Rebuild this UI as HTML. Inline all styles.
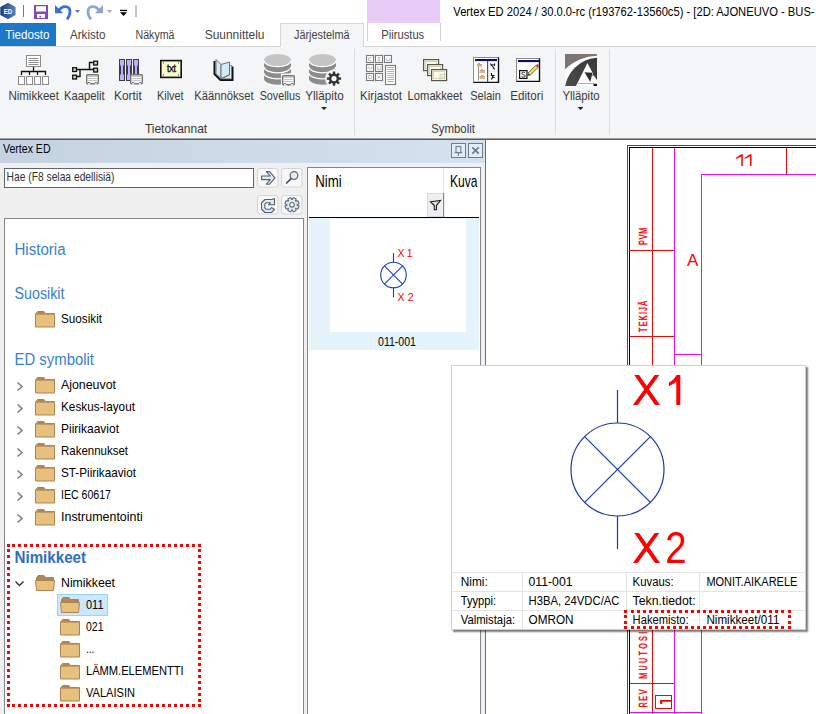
<!DOCTYPE html>
<html><head><meta charset="utf-8">
<style>
*{box-sizing:border-box}
body{margin:0;width:816px;height:714px;overflow:hidden;position:relative;background:#fff;font-family:"Liberation Sans",sans-serif;}
.a{position:absolute}
.t{position:absolute;white-space:nowrap;line-height:1}
.rl{position:absolute;white-space:nowrap;line-height:1;font-size:11.5px;color:#444;top:91px}
.tab{position:absolute;white-space:nowrap;line-height:1;font-size:12px;color:#444;top:29px}
.ti{position:absolute;white-space:nowrap;line-height:1;font-size:12px;color:#000}
.tt{position:absolute;white-space:nowrap;line-height:1;font-size:11.5px;color:#000}
.hd{position:absolute;white-space:nowrap;line-height:1;font-size:15px;color:#3b7fd1}
</style></head><body>

<!-- title bar -->
<div class="a" style="left:0;top:0;width:816px;height:23px;background:#fff"></div>
<div class="a" style="left:367px;top:0;width:73px;height:23px;background:#e8ccf8"></div>

<!-- tab row -->
<div class="a" style="left:0;top:23px;width:56px;height:23px;background:#1e78c8"></div>
<div class="a" style="left:280px;top:23px;width:84px;height:24px;background:#f4f5f7;border:1px solid #d6d6d6;border-bottom:none"></div>
<div class="a" style="left:367px;top:23px;width:74px;height:18px;border-left:1px solid #d0d0d0;border-right:1px solid #d0d0d0"></div>
<div class="a" style="left:0;top:46px;width:280px;height:1px;background:#d6d6d6"></div>
<div class="a" style="left:364px;top:46px;width:452px;height:1px;background:#d6d6d6"></div>

<!-- ribbon -->
<div class="a" style="left:0;top:47px;width:816px;height:92px;background:#f4f5f7"></div>
<div class="a" style="left:354px;top:49px;width:1px;height:86px;background:#dcdcdc"></div>
<div class="a" style="left:555px;top:49px;width:1px;height:86px;background:#dcdcdc"></div>
<div class="a" style="left:609px;top:49px;width:1px;height:86px;background:#dcdcdc"></div>

<svg class="a" style="left:0;top:0" width="620" height="120" viewBox="0 0 620 120"><defs><linearGradient id="hexg" x1="0" x2="1"><stop offset="0" stop-color="#1b3d78"/><stop offset="1" stop-color="#5b80b9"/></linearGradient></defs><path d="M8,2.8 L15.6,7 V15 L8,19.2 L0.3,15 V7 Z" fill="url(#hexg)"/><text x="8" y="13.8" font-family="Liberation Sans" font-weight="bold" font-size="7" fill="#fff" text-anchor="middle" textLength="8.4" lengthAdjust="spacingAndGlyphs">ED</text><rect x="23" y="5" width="1" height="12" fill="#7a7a7a"/><path d="M34,5 H48 V19 H34 Z" fill="#8547b8"/><rect x="36" y="6.2" width="10" height="5.3" fill="#fff"/><rect x="37" y="14" width="8" height="4" fill="#fff"/><rect x="39.5" y="15.8" width="1.6" height="1.6" fill="#8547b8"/><path d="M58.5,11 C61.5,5.5 70,4.5 70,11.5 C70,14.8 68.8,17.3 67,19.3" fill="none" stroke="#3a6fd8" stroke-width="2.7"/><path d="M55,5 V13.2 H63.2 Z" fill="#3a6fd8"/><path d="M75,10 H80 L77.5,13 Z" fill="#5577a8"/><path d="M99.5,11 C96.5,5.5 88,4.5 88,11.5 C88,14.8 89.2,17.3 91,19.3" fill="none" stroke="#8ea6cc" stroke-width="2.7"/><path d="M103,5 V13.2 H94.8 Z" fill="#8ea6cc"/><path d="M107,10 H112 L109.5,13 Z" fill="#a8a8a8"/><rect x="120" y="9.8" width="7" height="1.3" fill="#000"/><path d="M120,12.2 H127 L123.5,16 Z" fill="#000"/><rect x="135.5" y="5" width="1" height="12" fill="#888"/><rect x="26.5" y="55.5" width="14" height="11" fill="#fff" stroke="#8c8c8c"/><path d="M28.5,58.5 H38.5 M28.5,60.5 H38.5 M28.5,62.5 H38.5 M28.5,64.5 H38.5" stroke="#808080" stroke-width="0.9"/><path d="M33.5,67 V71.5 M21.5,75 V71.5 H45.5 V75 M29.5,71.5 V75 M37.5,71.5 V75" fill="none" stroke="#111" stroke-width="1.3"/><rect x="18.5" y="76.5" width="6" height="8" fill="#fff" stroke="#8c8c8c"/><rect x="26.5" y="76.5" width="6" height="8" fill="#fff" stroke="#8c8c8c"/><rect x="34.5" y="76.5" width="6" height="8" fill="#fff" stroke="#8c8c8c"/><rect x="42.5" y="76.5" width="6" height="8" fill="#fff" stroke="#8c8c8c"/><path d="M77,69.5 H93 M80,69.5 V76.5 H77 M89.5,69.5 V62.5 H93" fill="none" stroke="#111" stroke-width="1.4"/><rect x="72.7" y="67.7" width="3.8" height="3.8" fill="#b6f0a8" stroke="#111" stroke-width="1.3"/><rect x="72.7" y="75.2" width="3.8" height="3.8" fill="#b6f0a8" stroke="#111" stroke-width="1.3"/><rect x="93.7" y="61.2" width="3.8" height="3.8" fill="#b6f0a8" stroke="#111" stroke-width="1.3"/><rect x="93.7" y="68.2" width="3.8" height="3.8" fill="#b6f0a8" stroke="#111" stroke-width="1.3"/><g transform="translate(86,74)"><rect x="0.7" y="0.7" width="11.6" height="9" rx="1" fill="#fff" stroke="#747474" stroke-width="1.4"/><rect x="2" y="9" width="2.2" height="1.6" fill="#fff"/><rect x="8.8" y="9" width="2.2" height="1.6" fill="#fff"/><rect x="2" y="8" width="2.2" height="1.2" fill="#747474"/><rect x="8.8" y="8" width="2.2" height="1.2" fill="#747474"/><path d="M2.2,2.5 H10.8 M2.2,4.5 H10.8 M2.2,6.5 H10.8" stroke="#bdbdbd" stroke-width="0.9"/></g><rect x="119" y="59" width="6" height="22" fill="#363c4c"/><path d="M120,60 H124 V64.5 L123,66.5 V73.5 L124,75.5 V80 H120 V75.5 L121,73.5 V66.5 L120,64.5 Z" fill="#c3b0fa"/><rect x="126" y="59" width="6" height="22" fill="#363c4c"/><path d="M127,60 H131 V64.5 L130,66.5 V73.5 L131,75.5 V80 H127 V75.5 L128,73.5 V66.5 L127,64.5 Z" fill="#c3b0fa"/><rect x="133" y="59" width="6" height="22" fill="#363c4c"/><path d="M134,60 H138 V64.5 L137,66.5 V73.5 L138,75.5 V80 H134 V75.5 L135,73.5 V66.5 L134,64.5 Z" fill="#c3b0fa"/><g transform="translate(130,74)"><rect x="0.7" y="0.7" width="11.6" height="9" rx="1" fill="#fff" stroke="#747474" stroke-width="1.4"/><rect x="2" y="9" width="2.2" height="1.6" fill="#fff"/><rect x="8.8" y="9" width="2.2" height="1.6" fill="#fff"/><rect x="2" y="8" width="2.2" height="1.2" fill="#747474"/><rect x="8.8" y="8" width="2.2" height="1.2" fill="#747474"/><path d="M2.2,2.5 H10.8 M2.2,4.5 H10.8 M2.2,6.5 H10.8" stroke="#bdbdbd" stroke-width="0.9"/></g><rect x="160.8" y="60.6" width="20.4" height="16.8" fill="#fbfbcb" stroke="#111" stroke-width="1.6"/><rect x="163" y="62.5" width="1" height="1" fill="#333"/><rect x="178" y="62.5" width="1" height="1" fill="#333"/><rect x="163" y="74.5" width="1" height="1" fill="#333"/><rect x="178" y="74.5" width="1" height="1" fill="#333"/><text x="171" y="72.3" font-family="Liberation Sans" font-size="10.5" fill="#111" stroke="#111" stroke-width="0.25" text-anchor="middle" letter-spacing="-0.8">txt</text><path d="M214.5,61 V74 L220.5,80 H232.5 V66.5" fill="none" stroke="#111" stroke-width="2"/><path d="M216,59.5 L221,64.5 V78.5 L216,73.5 Z" fill="#d5eaf9" stroke="#6e6e6e"/><path d="M229.5,65.5 H231.5 V78.8 H221.5 L229.5,75 Z" fill="#d5eaf9" stroke="#777" stroke-width="0.9"/><path d="M221,64.5 L229.5,62 V74.5 L221,78.5 Z" fill="#d5eaf9" stroke="#6e6e6e"/><path d="M264,60 V78.8 A13.5,6 0 0 0 291,78.8 V60 Z" fill="#8c8c8c"/><ellipse cx="277.5" cy="60" rx="13.5" ry="6" fill="#c4c4c4"/><path d="M264,60.6 A13.5,6 0 0 0 291,60.6 M264,66.8 A13.5,6 0 0 0 291,66.8 M264,72.9 A13.5,6 0 0 0 291,72.9" fill="none" stroke="#fff" stroke-width="1.3"/><rect x="281" y="73.5" width="15" height="12" fill="#f4f5f7"/><g transform="translate(282,75)"><rect x="0.7" y="0.7" width="11.6" height="9" rx="1" fill="#fff" stroke="#747474" stroke-width="1.4"/><rect x="2" y="9" width="2.2" height="1.6" fill="#fff"/><rect x="8.8" y="9" width="2.2" height="1.6" fill="#fff"/><rect x="2" y="8" width="2.2" height="1.2" fill="#747474"/><rect x="8.8" y="8" width="2.2" height="1.2" fill="#747474"/><path d="M2.2,2.5 H10.8 M2.2,4.5 H10.8 M2.2,6.5 H10.8" stroke="#bdbdbd" stroke-width="0.9"/></g><path d="M309,60 V78.8 A13.5,6 0 0 0 336,78.8 V60 Z" fill="#8c8c8c"/><ellipse cx="322.5" cy="60" rx="13.5" ry="6" fill="#c4c4c4"/><path d="M309,60.6 A13.5,6 0 0 0 336,60.6 M309,66.8 A13.5,6 0 0 0 336,66.8 M309,72.9 A13.5,6 0 0 0 336,72.9" fill="none" stroke="#fff" stroke-width="1.3"/><circle cx="334" cy="78.5" r="9" fill="#f4f5f7"/><g fill="#333"><circle cx="334" cy="78.6" r="5.1"/><rect x="332.8" y="71.5" width="2.4" height="3" transform="rotate(0 334 78.6)"/><rect x="332.8" y="71.5" width="2.4" height="3" transform="rotate(45 334 78.6)"/><rect x="332.8" y="71.5" width="2.4" height="3" transform="rotate(90 334 78.6)"/><rect x="332.8" y="71.5" width="2.4" height="3" transform="rotate(135 334 78.6)"/><rect x="332.8" y="71.5" width="2.4" height="3" transform="rotate(180 334 78.6)"/><rect x="332.8" y="71.5" width="2.4" height="3" transform="rotate(225 334 78.6)"/><rect x="332.8" y="71.5" width="2.4" height="3" transform="rotate(270 334 78.6)"/><rect x="332.8" y="71.5" width="2.4" height="3" transform="rotate(315 334 78.6)"/></g><circle cx="334" cy="78.6" r="2.6" fill="#fff"/><rect x="366.5" y="55.5" width="7" height="7" fill="#fff" stroke="#7a7a7a" stroke-width="1.1"/><rect x="375.5" y="55.5" width="7" height="7" fill="#fff" stroke="#7a7a7a" stroke-width="1.1"/><rect x="384.5" y="55.5" width="7" height="7" fill="#fff" stroke="#7a7a7a" stroke-width="1.1"/><rect x="366.5" y="64.5" width="7" height="7" fill="#fff" stroke="#7a7a7a" stroke-width="1.1"/><rect x="375.5" y="64.5" width="7" height="7" fill="#fff" stroke="#7a7a7a" stroke-width="1.1"/><rect x="366.5" y="73.5" width="7" height="7" fill="#fff" stroke="#7a7a7a" stroke-width="1.1"/><rect x="375.5" y="73.5" width="7" height="7" fill="#fff" stroke="#7a7a7a" stroke-width="1.1"/><path d="M371.5,57.8 H368.8 V60.8 H371.5" fill="none" stroke="#b0b0b0" stroke-width="0.9"/><path d="M377.5,57.8 H380.5 M377.5,60.8 H380.5 M379,57.8 V60.8" fill="none" stroke="#b0b0b0" stroke-width="0.9"/><path d="M386.8,57.8 V60.8 H389.8 V57.8" fill="none" stroke="#b0b0b0" stroke-width="0.9"/><path d="M368.8,66.5 V68.5 Q370.3,70 371.8,68.5 V66.5" fill="none" stroke="#b0b0b0" stroke-width="0.9"/><path d="M377.8,66.3 V69.8 H380.8 V66.3" fill="none" stroke="#b0b0b0" stroke-width="0.9"/><circle cx="370" cy="77" r="1.7" fill="none" stroke="#b0b0b0" stroke-width="0.9"/><path d="M377.5,75.5 L380.5,78.5 M380.5,75.5 L377.5,78.5" stroke="#b0b0b0" stroke-width="0.9"/><rect x="385.5" y="65.5" width="10" height="19" fill="#fff" stroke="#7a7a7a" stroke-width="1.1"/><path d="M387.3,67.5 H394 M387.3,69.5 H394 M387.3,71.5 H394 M387.3,73.5 H394 M387.3,75.5 H394 M387.3,77.5 H394 M387.3,79.5 H394 M387.3,81.5 H394" stroke="#a8a8a8" stroke-width="0.9"/><rect x="423.6" y="59.6" width="15" height="11" fill="#fbf9ea" stroke="#555" stroke-width="1.2"/><rect x="425.5" y="61.5" width="11" height="7" fill="none" stroke="#cfcfa6" stroke-width="0.9"/><rect x="427.6" y="64.6" width="15" height="11" fill="#fbf9ea" stroke="#555" stroke-width="1.2"/><rect x="429.5" y="66.5" width="11" height="7" fill="none" stroke="#cfcfa6" stroke-width="0.9"/><rect x="431.6" y="69.6" width="15" height="11" fill="#fbf9ea" stroke="#555" stroke-width="1.2"/><rect x="433.5" y="71.5" width="11" height="7" fill="none" stroke="#cfcfa6" stroke-width="0.9"/><path d="M440,74.5 H446 M440,77 H446 M440,74.5 V80" stroke="#cfcfa6" stroke-width="0.9"/><rect x="473.5" y="57.5" width="25" height="25" fill="#fff" stroke="#8a8a8a"/><path d="M473.5,82.4 H498.5 V57.5" fill="none" stroke="#111" stroke-width="1.4"/><rect x="475" y="59" width="22" height="2.1" fill="#0a0a80"/><rect x="487" y="61" width="1.2" height="21" fill="#555"/><rect x="488" y="70.8" width="9" height="0.8" fill="#ddd"/><rect x="478" y="66.5" width="0.9" height="14" fill="#8a8a8a"/><path d="M479,72 H480 M479,77 H480" stroke="#8a8a8a" stroke-width="0.8"/><rect x="477" y="64" width="5" height="3" fill="#dcb88b"/><rect x="478" y="63" width="2" height="1" fill="#c59f72"/><rect x="477" y="64" width="5" height="0.8" fill="#c59f72"/><rect x="480" y="70" width="5" height="3" fill="#dcb88b"/><rect x="481" y="69" width="2" height="1" fill="#c59f72"/><rect x="480" y="70" width="5" height="0.8" fill="#c59f72"/><rect x="480" y="76" width="5" height="3" fill="#dcb88b"/><rect x="481" y="75" width="2" height="1" fill="#c59f72"/><rect x="480" y="76" width="5" height="0.8" fill="#c59f72"/><path d="M490.5,63.5 L491.5,65.5 L493.5,64.5 M494.5,63.5 V66 M492.5,66 L494.5,69.5" fill="none" stroke="#111" stroke-width="1.2"/><path d="M491.5,73 V75.5 H494.5 M493.5,75 L491.5,79.5 M492.5,77.5 H494.5" fill="none" stroke="#111" stroke-width="1.2"/><rect x="516.5" y="58.5" width="23" height="23" fill="#fff" stroke="#8a8a8a"/><path d="M516.5,81.4 H539.5 V58.5" fill="none" stroke="#111" stroke-width="1.4"/><rect x="518" y="60" width="21" height="2.1" fill="#0a0a80"/><rect x="519.6" y="70.6" width="7.4" height="7.8" fill="#fff" stroke="#111" stroke-width="1.2"/><path d="M525.2,73 C525,72 521.8,71.7 521.6,73.3 C521.5,75 525.3,74.2 525.3,76.1 C525.2,77.5 522,77.4 521.5,76.3" fill="none" stroke="#111" stroke-width="0.85"/><path d="M528,73.2 L535.8,65.4 L537.9,67.5 L530.1,75.3 Z" fill="#f3ec3c" stroke="#3a3a3a" stroke-width="0.8"/><path d="M535.8,65.4 L537.4,63.8 L539.5,65.9 L537.9,67.5 Z" fill="#e83870"/><path d="M528,73.2 L527.6,75.7 L530.1,75.3 Z" fill="#333"/><g transform="translate(565,54)"><clipPath id="vclip"><rect width="32" height="32"/></clipPath><linearGradient id="vg" x1="0" y1="1" x2="1" y2="0"><stop offset="0" stop-color="#585858"/><stop offset="1" stop-color="#2e2e2e"/></linearGradient><g clip-path="url(#vclip)"><rect width="32" height="32" fill="#7c7572"/><circle cx="33" cy="49" r="47.2" fill="#fff"/><circle cx="34" cy="38" r="34.3" fill="url(#vg)"/><path d="M11,32 L22.4,9 L28,19.5 L27.2,22 L28.7,21.6 L32,26 V32 Z" fill="#fff"/><path d="M19.5,18.2 L27.5,18.8 L25.3,28 Z" fill="#2f2f2f"/><path d="M13,29.5 H29" stroke="#999" stroke-width="0.8"/><rect x="28.5" y="29.8" width="3.5" height="2.2" fill="#111"/></g></g><path d="M321,107 H327 L324,110 Z" fill="#222"/><path d="M577.5,107 H583.5 L580.5,110 Z" fill="#222"/></svg>
<div class="a" style="left:0;top:138px;width:816px;height:1px;background:#a0a0a0"></div><div class="a" style="left:0;top:139px;width:816px;height:1px;background:#5a5a5a"></div>

<!-- left panel -->
<div class="a" style="left:0;top:140px;width:485px;height:574px;background:#f0f0f0"></div>
<div class="a" style="left:0;top:140px;width:485px;height:23px;background:linear-gradient(90deg,#c5d3e1,#d4e2ef)"></div>
<div class="a" style="left:485px;top:140px;width:1px;height:574px;background:#6f6f6f"></div>

<!-- search -->
<div class="a" style="left:4px;top:168px;width:250px;height:20px;background:#fff;border:1px solid #646464"></div>

<!-- tree panel -->
<div class="a" style="left:4px;top:218px;width:300px;height:500px;background:#fff;border:1px solid #828790"></div>
<div class="a" style="left:57px;top:594px;width:51px;height:22px;background:#cce8ff;border:1px solid #99d1ff"></div>
<svg class="a" style="left:0;top:0" width="120" height="714" viewBox="0 0 120 714"><path d="M35.5,327 V314 L37.5,311.5 H44 L45.5,313.5 H54.5 V327 Z" fill="#e6c07c" stroke="#ad8352"/><path d="M36,314 L37.7,312 H43.8 L45.3,314 Z" fill="#b18756"/><rect x="36" y="314" width="18" height="0.8" fill="#b9925f"/><path d="M35.5,393 V380 L37.5,377.5 H44 L45.5,379.5 H54.5 V393 Z" fill="#e6c07c" stroke="#ad8352"/><path d="M36,380 L37.7,378 H43.8 L45.3,380 Z" fill="#b18756"/><rect x="36" y="380" width="18" height="0.8" fill="#b9925f"/><path d="M17.5,382.5 L22.0,386.5 L17.5,390.5" fill="none" stroke="#7a7a7a" stroke-width="1.4"/><path d="M35.5,415 V402 L37.5,399.5 H44 L45.5,401.5 H54.5 V415 Z" fill="#e6c07c" stroke="#ad8352"/><path d="M36,402 L37.7,400 H43.8 L45.3,402 Z" fill="#b18756"/><rect x="36" y="402" width="18" height="0.8" fill="#b9925f"/><path d="M17.5,404.5 L22.0,408.5 L17.5,412.5" fill="none" stroke="#7a7a7a" stroke-width="1.4"/><path d="M35.5,437 V424 L37.5,421.5 H44 L45.5,423.5 H54.5 V437 Z" fill="#e6c07c" stroke="#ad8352"/><path d="M36,424 L37.7,422 H43.8 L45.3,424 Z" fill="#b18756"/><rect x="36" y="424" width="18" height="0.8" fill="#b9925f"/><path d="M17.5,426.5 L22.0,430.5 L17.5,434.5" fill="none" stroke="#7a7a7a" stroke-width="1.4"/><path d="M35.5,459 V446 L37.5,443.5 H44 L45.5,445.5 H54.5 V459 Z" fill="#e6c07c" stroke="#ad8352"/><path d="M36,446 L37.7,444 H43.8 L45.3,446 Z" fill="#b18756"/><rect x="36" y="446" width="18" height="0.8" fill="#b9925f"/><path d="M17.5,448.5 L22.0,452.5 L17.5,456.5" fill="none" stroke="#7a7a7a" stroke-width="1.4"/><path d="M35.5,481 V468 L37.5,465.5 H44 L45.5,467.5 H54.5 V481 Z" fill="#e6c07c" stroke="#ad8352"/><path d="M36,468 L37.7,466 H43.8 L45.3,468 Z" fill="#b18756"/><rect x="36" y="468" width="18" height="0.8" fill="#b9925f"/><path d="M17.5,470.5 L22.0,474.5 L17.5,478.5" fill="none" stroke="#7a7a7a" stroke-width="1.4"/><path d="M35.5,503 V490 L37.5,487.5 H44 L45.5,489.5 H54.5 V503 Z" fill="#e6c07c" stroke="#ad8352"/><path d="M36,490 L37.7,488 H43.8 L45.3,490 Z" fill="#b18756"/><rect x="36" y="490" width="18" height="0.8" fill="#b9925f"/><path d="M17.5,492.5 L22.0,496.5 L17.5,500.5" fill="none" stroke="#7a7a7a" stroke-width="1.4"/><path d="M35.5,525 V512 L37.5,509.5 H44 L45.5,511.5 H54.5 V525 Z" fill="#e6c07c" stroke="#ad8352"/><path d="M36,512 L37.7,510 H43.8 L45.3,512 Z" fill="#b18756"/><rect x="36" y="512" width="18" height="0.8" fill="#b9925f"/><path d="M17.5,514.5 L22.0,518.5 L17.5,522.5" fill="none" stroke="#7a7a7a" stroke-width="1.4"/><path d="M15.5,581.5 L19.5,585.5 L23.5,581.5" fill="none" stroke="#333" stroke-width="1.4"/><path d="M36.5,578 L38,575.5 H44 L45.5,577.5 H53.5 V580 H36.5 Z" fill="#b18756" stroke="#ad8352"/><path d="M35.5,580.5 H54.5 L53.5,590.5 H36.5 Z" fill="#e6c07c" stroke="#ad8352"/><path d="M61.5,600 L63,597.5 H69 L70.5,599.5 H78.5 V602 H61.5 Z" fill="#b18756" stroke="#ad8352"/><path d="M60.5,602.5 H79.5 L78.5,612.5 H61.5 Z" fill="#e6c07c" stroke="#ad8352"/><path d="M60.5,635 V622 L62.5,619.5 H69 L70.5,621.5 H79.5 V635 Z" fill="#e6c07c" stroke="#ad8352"/><path d="M61,622 L62.7,620 H68.8 L70.3,622 Z" fill="#b18756"/><rect x="61" y="622" width="18" height="0.8" fill="#b9925f"/><path d="M60.5,657 V644 L62.5,641.5 H69 L70.5,643.5 H79.5 V657 Z" fill="#e6c07c" stroke="#ad8352"/><path d="M61,644 L62.7,642 H68.8 L70.3,644 Z" fill="#b18756"/><rect x="61" y="644" width="18" height="0.8" fill="#b9925f"/><path d="M60.5,679 V666 L62.5,663.5 H69 L70.5,665.5 H79.5 V679 Z" fill="#e6c07c" stroke="#ad8352"/><path d="M61,666 L62.7,664 H68.8 L70.3,666 Z" fill="#b18756"/><rect x="61" y="666" width="18" height="0.8" fill="#b9925f"/><path d="M60.5,701 V688 L62.5,685.5 H69 L70.5,687.5 H79.5 V701 Z" fill="#e6c07c" stroke="#ad8352"/><path d="M61,688 L62.7,686 H68.8 L70.3,688 Z" fill="#b18756"/><rect x="61" y="688" width="18" height="0.8" fill="#b9925f"/></svg>
<div class="a" style="left:7px;top:544px;width:194px;height:163px;border:3px dotted #f00"></div>

<!-- grid -->
<div class="a" style="left:307px;top:167px;width:174px;height:560px;background:#fff;border:1px solid #828790"></div>
<div class="a" style="left:309px;top:217px;width:170px;height:1px;background:#000"></div>
<div class="a" style="left:309px;top:218px;width:170px;height:132px;background:#e5f3fb"></div>
<div class="a" style="left:330px;top:219px;width:136px;height:113px;background:#fff"></div>

<svg class="a" style="left:0;top:0" width="816" height="360" viewBox="0 0 816 360"><rect x="451.5" y="143.5" width="14" height="14" fill="#e3edf7" stroke="#6f7e8c"/><rect x="456" y="146.5" width="4.8" height="6" fill="none" stroke="#6f7e8c" stroke-width="1.1"/><path d="M454.5,152.8 H462.3 M458.4,152.8 V156" stroke="#6f7e8c" stroke-width="1.1"/><rect x="468.5" y="143.5" width="14" height="14" fill="#e3edf7" stroke="#6f7e8c"/><path d="M472.3,147.3 L478.7,153.7 M478.7,147.3 L472.3,153.7" stroke="#6f7e8c" stroke-width="1.8"/><rect x="257.5" y="168.5" width="20.5" height="18.5" rx="2.5" fill="#f8f8f8" stroke="#d4d4d4"/><rect x="281.5" y="168.5" width="20.5" height="18.5" rx="2.5" fill="#f8f8f8" stroke="#d4d4d4"/><rect x="257.5" y="195.5" width="20.5" height="18.5" rx="2.5" fill="#f8f8f8" stroke="#d4d4d4"/><rect x="281.5" y="195.5" width="20.5" height="18.5" rx="2.5" fill="#f8f8f8" stroke="#d4d4d4"/><polygon points="266.3,171.6 269.6,171.6 275,177.8 269.6,184.2 266.3,184.2 270.3,179.6 261.6,179.6 261.6,176 270.3,176" fill="#e2eaf1" stroke="#4f6274" stroke-width="1.1" stroke-linejoin="round"/><circle cx="294" cy="175.5" r="3.8" fill="#e5ecf2" stroke="#5a6e80" stroke-width="1.3"/><path d="M291.3,178.3 L286.2,183.5" stroke="#44505c" stroke-width="1.7"/><polygon points="272,199.5 265,199.5 261.5,203 261.5,209 265,212.5 271.5,212.5 274.5,209.5 271.5,207.5 270,209.3 266.3,209.3 264.8,207.8 264.8,204.2 266.3,202.7 270.5,202.7 268.5,204.8 274.5,204.8 274.5,198.5" fill="#e2eaf1" stroke="#4f6274" stroke-width="1.1" stroke-linejoin="round"/><polygon points="299.07,206.18 297.97,208.82 295.72,208.57 295.77,208.52 296.02,210.77 293.38,211.87 291.96,210.10 292.04,210.10 290.62,211.87 287.98,210.77 288.23,208.52 288.28,208.57 286.03,208.82 284.93,206.18 286.70,204.76 286.70,204.84 284.93,203.42 286.03,200.78 288.28,201.03 288.23,201.08 287.98,198.83 290.62,197.73 292.04,199.50 291.96,199.50 293.38,197.73 296.02,198.83 295.77,201.08 295.72,201.03 297.97,200.78 299.07,203.42 297.30,204.84 297.30,204.76" fill="#e3eaf0" stroke="#5a6e80" stroke-width="1.1"/><circle cx="292" cy="204.8" r="2.3" fill="#fff" stroke="#5a6e80" stroke-width="1.1"/><rect x="443" y="168" width="1" height="49" fill="#e5e5e5"/><rect x="427.5" y="193.5" width="16" height="23" fill="#efefef" stroke="#dadada"/><rect x="443" y="193" width="1.2" height="24" fill="#8a8a8a"/><path d="M430.5,201.8 L440.5,200.5 L436.5,205.5 V209.8 H434.3 V205.5 Z" fill="#dcdcdc" stroke="#1a1a1a" stroke-width="1.1" stroke-linejoin="miter"/><g stroke="#1c3cbf" stroke-width="1.05" fill="none"><circle cx="393.5" cy="275" r="12.8"/><path d="M393.5,253 V262.2 M393.5,287.8 V297.5 M384.4,265.9 L402.6,284.1 M402.6,265.9 L384.4,284.1"/></g><g fill="#f00" font-family="Liberation Sans" font-size="10.5"><text x="397.5" y="256.8" textLength="15" lengthAdjust="spacing">X1</text><text x="397.5" y="300.6" textLength="16" lengthAdjust="spacing">X2</text></g></svg>
<!-- canvas -->
<div class="a" style="left:486px;top:140px;width:330px;height:574px;background:#fff"></div>


<svg class="a" style="left:486px;top:140px" width="330" height="574" viewBox="486 140 330 574">
<g shape-rendering="crispEdges">
<rect x="627" y="145" width="189" height="1" fill="#008000"/>
<rect x="627" y="145" width="1" height="569" fill="#008000"/>
<rect x="629" y="147" width="187" height="1" fill="#000"/>
<rect x="629" y="147" width="1" height="567" fill="#000"/>
<rect x="652" y="148" width="1" height="566" fill="#f00"/>
<rect x="674" y="148" width="1" height="566" fill="#f0f"/>
<rect x="701" y="174" width="115" height="1" fill="#f0f"/>
<rect x="701" y="174" width="1" height="540" fill="#f0f"/>
<rect x="786" y="148" width="1" height="26" fill="#f00"/>
<rect x="630" y="250" width="44" height="1" fill="#f00"/>
<rect x="630" y="336" width="44" height="1" fill="#f00"/>
<rect x="675" y="354" width="26" height="1" fill="#f0f"/>
<rect x="630" y="683" width="44" height="1" fill="#f00"/>
<rect x="630" y="712" width="71" height="1" fill="#f0f"/>
<rect x="655.5" y="695.5" width="16" height="13" fill="none" stroke="#f00" stroke-width="1"/>
</g>
<g fill="#f00" font-family="Liberation Sans">
<path d="M741.3,154.2 H742.8 V166 H741.3 V156.5 L736.0,159.1 V157.7 Z"/><path d="M750.0,154.2 H751.5 V166 H750.0 V156.5 L744.7,159.1 V157.7 Z"/>
<text x="687" y="266" font-size="17">A</text>
<text transform="translate(647,245) rotate(-90) scale(0.62,1)" font-size="11.5" stroke="#f00" stroke-width="0.45" textLength="27.9" lengthAdjust="spacing">PVM</text>
<text transform="translate(647,332) rotate(-90) scale(0.62,1)" font-size="11.5" stroke="#f00" stroke-width="0.45" textLength="50.0" lengthAdjust="spacing">TEKIJÄ</text>
<text transform="translate(647,678.8) rotate(-90) scale(0.62,1)" font-size="11.5" stroke="#f00" stroke-width="0.45" textLength="75.8" lengthAdjust="spacing">MUUTOSI</text>
<text transform="translate(647,707.5) rotate(-90) scale(0.62,1)" font-size="11.5" stroke="#f00" stroke-width="0.45" textLength="29.0" lengthAdjust="spacing">REV</text>
<path d="M660,700 H671 V701.7 H662 L662.4,704 H660.2 Z"/>
</g>
</svg>

<!-- tooltip -->
<div class="a" style="left:451px;top:365px;width:355px;height:265px;background:#fff;border:1px solid #d0d0d0;box-shadow:2px 2px 1.5px rgba(0,0,0,.5)"></div>
<svg class="a" style="left:452px;top:366px" width="354" height="206" viewBox="452 366 354 206">
<g stroke="#1a38b4" stroke-width="1.2" fill="none">
<circle cx="617.5" cy="469.5" r="46.5"/>
<line x1="617.5" y1="390" x2="617.5" y2="423"/>
<line x1="617.5" y1="516" x2="617.5" y2="549"/>
<line x1="584.6" y1="436.6" x2="650.4" y2="502.4"/>
<line x1="650.4" y1="436.6" x2="584.6" y2="502.4"/>
</g>
<g fill="#f00"><polygon points="634.3,375 639.1,375 660,405 655,405"/><polygon points="654.6,375 659.3,375 637.7,405 632.9,405"/><polygon points="634.3,533 639.1,533 660,563 655,563"/><polygon points="654.6,533 659.3,533 637.7,563 632.9,563"/><path d="M676.6,375 H680.3 V405 H676.3 V381.3 C674.5,383.2 671.5,385.2 668.9,386.3 V382.5 C672,381 675,378.2 676.6,375 Z"/><text x="665.3" y="563" font-family="Liberation Sans" font-size="43.5" textLength="21.4" lengthAdjust="spacingAndGlyphs">2</text></g>
</svg>
<div class="a" style="left:452px;top:572px;width:353px;height:1px;background:#e3e3e3"></div>
<div class="a" style="left:452px;top:591px;width:353px;height:1px;background:#e3e3e3"></div>
<div class="a" style="left:452px;top:610px;width:353px;height:1px;background:#e3e3e3"></div>
<div class="a" style="left:522px;top:572px;width:1px;height:57px;background:#e3e3e3"></div>
<div class="a" style="left:626px;top:572px;width:1px;height:57px;background:#e3e3e3"></div>
<div class="a" style="left:699px;top:572px;width:1px;height:57px;background:#e3e3e3"></div>
<div class="a" style="left:624px;top:610px;width:167px;height:19px;border:3px dotted #f00"></div>
<svg class="a" style="left:0;top:0;pointer-events:none" width="816" height="714" viewBox="0 0 816 714" font-family="Liberation Sans"><text x="453.3" y="15.7" font-size="12.7" textLength="361.3" lengthAdjust="spacingAndGlyphs">Vertex ED 2024 / 30.0.0-rc (r193762-13560c5) - [2D: AJONEUVO - BUS-</text>
<text x="5.3" y="39" font-size="12.5" textLength="44.2" lengthAdjust="spacingAndGlyphs" fill="#fff">Tiedosto</text>
<text x="70" y="39" font-size="12.5" textLength="35.5" lengthAdjust="spacingAndGlyphs" fill="#444">Arkisto</text>
<text x="135.5" y="39" font-size="12.5" textLength="39" lengthAdjust="spacingAndGlyphs" fill="#444">Näkymä</text>
<text x="204.7" y="39" font-size="12.5" textLength="59.8" lengthAdjust="spacingAndGlyphs" fill="#444">Suunnittelu</text>
<text x="294" y="39" font-size="12.5" textLength="55.5" lengthAdjust="spacingAndGlyphs" fill="#444">Järjestelmä</text>
<text x="381.3" y="39" font-size="12.5" textLength="42.9" lengthAdjust="spacingAndGlyphs" fill="#444">Piirustus</text>
<text x="8.4" y="100.2" font-size="11.9" textLength="50.5" lengthAdjust="spacingAndGlyphs" fill="#3a3a3a">Nimikkeet</text>
<text x="63.9" y="100.2" font-size="11.9" textLength="40.7" lengthAdjust="spacingAndGlyphs" fill="#3a3a3a">Kaapelit</text>
<text x="114" y="100.2" font-size="11.9" textLength="27.8" lengthAdjust="spacingAndGlyphs" fill="#3a3a3a">Kortit</text>
<text x="157" y="100.2" font-size="11.9" textLength="26.6" lengthAdjust="spacingAndGlyphs" fill="#3a3a3a">Kilvet</text>
<text x="194.3" y="100.2" font-size="11.9" textLength="59.3" lengthAdjust="spacingAndGlyphs" fill="#3a3a3a">Käännökset</text>
<text x="259.7" y="100.2" font-size="11.9" textLength="40.7" lengthAdjust="spacingAndGlyphs" fill="#3a3a3a">Sovellus</text>
<text x="305.2" y="100.2" font-size="11.9" textLength="38.5" lengthAdjust="spacingAndGlyphs" fill="#3a3a3a">Ylläpito</text>
<text x="360" y="100.2" font-size="11.9" textLength="41.9" lengthAdjust="spacingAndGlyphs" fill="#3a3a3a">Kirjastot</text>
<text x="407.6" y="100.2" font-size="11.9" textLength="54.8" lengthAdjust="spacingAndGlyphs" fill="#3a3a3a">Lomakkeet</text>
<text x="470.3" y="100.2" font-size="11.9" textLength="30.5" lengthAdjust="spacingAndGlyphs" fill="#3a3a3a">Selain</text>
<text x="510.3" y="100.2" font-size="11.9" textLength="33.0" lengthAdjust="spacingAndGlyphs" fill="#3a3a3a">Editori</text>
<text x="562.4" y="100.2" font-size="11.9" textLength="37.2" lengthAdjust="spacingAndGlyphs" fill="#3a3a3a">Ylläpito</text>
<text x="144.9" y="133" font-size="11.9" textLength="62.3" lengthAdjust="spacingAndGlyphs" fill="#3a3a3a">Tietokannat</text>
<text x="431.2" y="133" font-size="11.9" textLength="43.7" lengthAdjust="spacingAndGlyphs" fill="#3a3a3a">Symbolit</text>
<text x="3" y="153" font-size="12.7" textLength="47.5" lengthAdjust="spacingAndGlyphs">Vertex ED</text>
<text x="6.5" y="180.8" font-size="12.7" textLength="108" lengthAdjust="spacingAndGlyphs" fill="#333">Hae (F8 selaa edellisiä)</text>
<text x="14.5" y="254.7" font-size="16.0" textLength="51" lengthAdjust="spacingAndGlyphs" fill="#3a7fd0">Historia</text>
<text x="14.5" y="298.8" font-size="16.0" textLength="50" lengthAdjust="spacingAndGlyphs" fill="#3a7fd0">Suosikit</text>
<text x="14.5" y="364.7" font-size="16.0" textLength="79.5" lengthAdjust="spacingAndGlyphs" fill="#3a7fd0">ED symbolit</text>
<text x="14.5" y="562.8" font-size="16.0" textLength="71.5" lengthAdjust="spacingAndGlyphs" font-weight="bold" fill="#2f6dc2">Nimikkeet</text>
<text x="61" y="323" font-size="12.7" textLength="41" lengthAdjust="spacingAndGlyphs">Suosikit</text>
<text x="61" y="388.8" font-size="12.7" textLength="55" lengthAdjust="spacingAndGlyphs">Ajoneuvot</text>
<text x="61" y="410.8" font-size="12.7" textLength="74" lengthAdjust="spacingAndGlyphs">Keskus-layout</text>
<text x="61" y="432.8" font-size="12.7" textLength="58" lengthAdjust="spacingAndGlyphs">Piirikaaviot</text>
<text x="61" y="454.8" font-size="12.7" textLength="67" lengthAdjust="spacingAndGlyphs">Rakennukset</text>
<text x="61" y="476.8" font-size="12.7" textLength="75" lengthAdjust="spacingAndGlyphs">ST-Piirikaaviot</text>
<text x="61" y="498.8" font-size="12.7" textLength="50" lengthAdjust="spacingAndGlyphs">IEC 60617</text>
<text x="61" y="520.8" font-size="12.7" textLength="81.7" lengthAdjust="spacingAndGlyphs">Instrumentointi</text>
<text x="61" y="587" font-size="12.7" textLength="54" lengthAdjust="spacingAndGlyphs">Nimikkeet</text>
<text x="86" y="609" font-size="12.7" textLength="17.5" lengthAdjust="spacingAndGlyphs">011</text>
<text x="86" y="631" font-size="12.7" textLength="17.5" lengthAdjust="spacingAndGlyphs">021</text>
<text x="86" y="653" font-size="12.7" textLength="8.4" lengthAdjust="spacingAndGlyphs">...</text>
<text x="86" y="675" font-size="12.7" textLength="97.6" lengthAdjust="spacingAndGlyphs">LÄMM.ELEMENTTI</text>
<text x="86" y="697" font-size="12.7" textLength="49" lengthAdjust="spacingAndGlyphs">VALAISIN</text>
<text x="315.2" y="187.2" font-size="15.7" textLength="26.5" lengthAdjust="spacingAndGlyphs">Nimi</text>
<text x="450" y="187.2" font-size="15.7" textLength="27.5" lengthAdjust="spacingAndGlyphs">Kuva</text>
<text x="378" y="346.3" font-size="12.7" textLength="38" lengthAdjust="spacingAndGlyphs">011-001</text>
<text x="460.7" y="586" font-size="12.5" textLength="27" lengthAdjust="spacingAndGlyphs">Nimi:</text>
<text x="528.5" y="586" font-size="12.5" textLength="44" lengthAdjust="spacingAndGlyphs">011-001</text>
<text x="632.6" y="586" font-size="12.5" textLength="41" lengthAdjust="spacingAndGlyphs">Kuvaus:</text>
<text x="706.4" y="586" font-size="12.5" textLength="91" lengthAdjust="spacingAndGlyphs">MONIT.AIKARELE</text>
<text x="460.7" y="604.5" font-size="12.5" textLength="35.5" lengthAdjust="spacingAndGlyphs">Tyyppi:</text>
<text x="528.5" y="604.5" font-size="12.5" textLength="91" lengthAdjust="spacingAndGlyphs">H3BA, 24VDC/AC</text>
<text x="632.6" y="604.5" font-size="12.5" textLength="63" lengthAdjust="spacingAndGlyphs">Tekn.tiedot:</text>
<text x="460.7" y="623.5" font-size="12.5" textLength="54.4" lengthAdjust="spacingAndGlyphs">Valmistaja:</text>
<text x="528.5" y="623.5" font-size="12.5" textLength="45" lengthAdjust="spacingAndGlyphs">OMRON</text>
<text x="632.6" y="623.5" font-size="12.5" textLength="56" lengthAdjust="spacingAndGlyphs">Hakemisto:</text>
<text x="706.4" y="623.5" font-size="12.5" textLength="73" lengthAdjust="spacingAndGlyphs">Nimikkeet/011</text></svg>
</body></html>
